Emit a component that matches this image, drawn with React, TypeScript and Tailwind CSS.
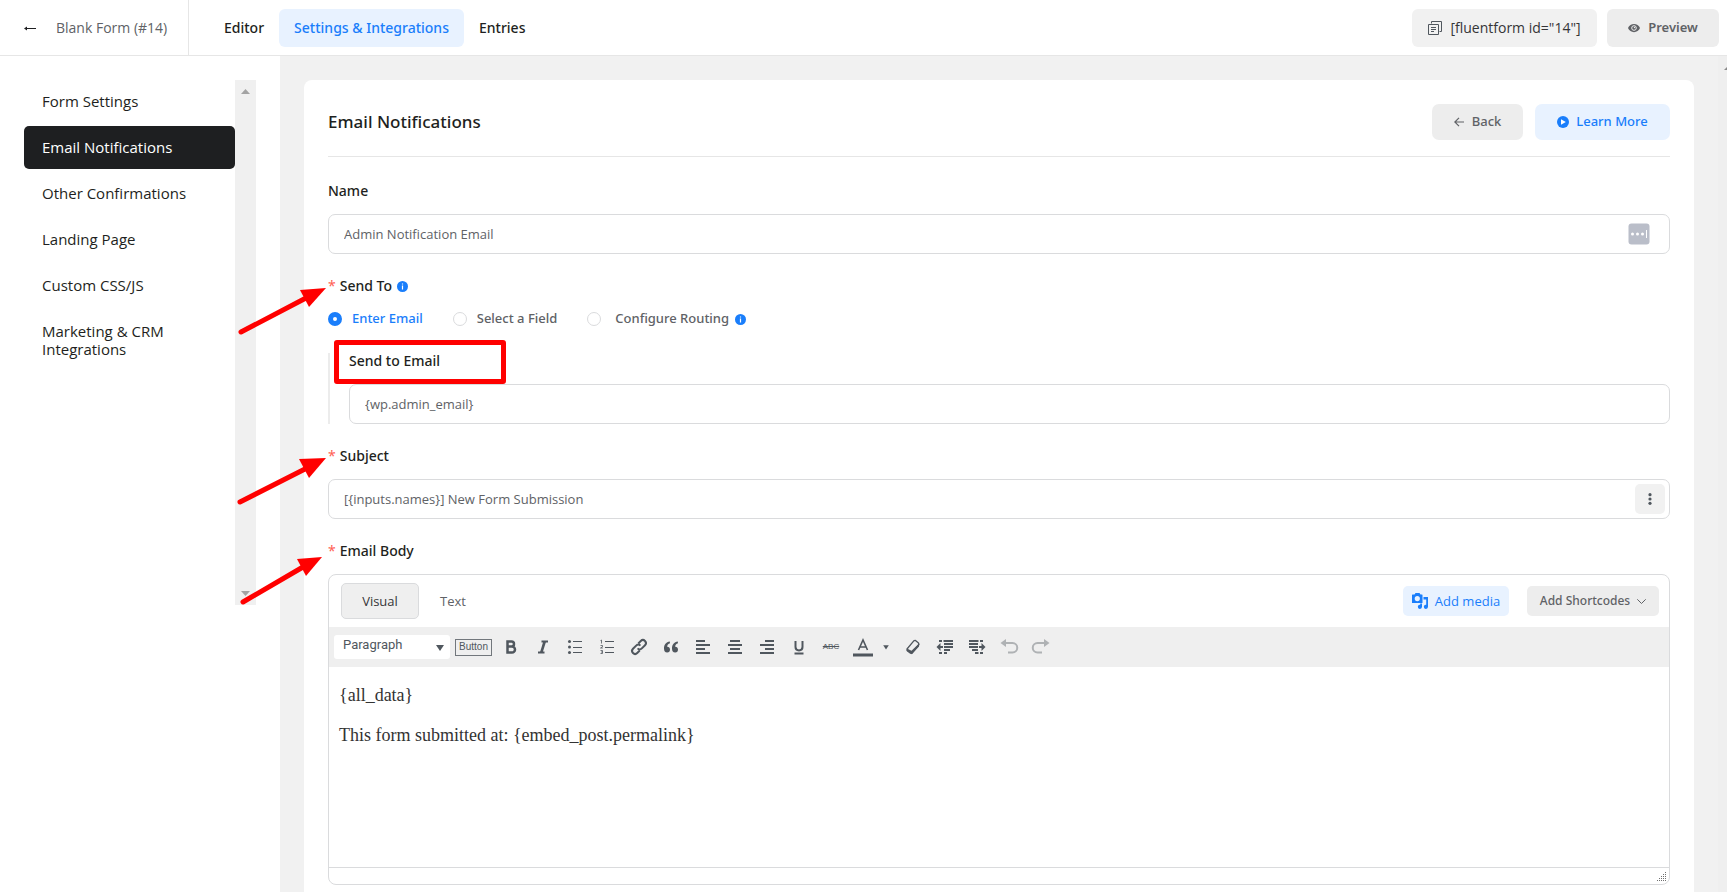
import type { ReactNode } from "react";
import clsx from "clsx";

const MENU = [
  "Form Settings",
  "Email Notifications",
  "Other Confirmations",
  "Landing Page",
  "Custom CSS/JS",
  "Marketing & CRM Integrations",
];

const TABS = ["Editor", "Settings & Integrations", "Entries"];

const ARROWS = [
  { line: "M241 332 L306 298", head: "326,288 300,290 309,307" },
  { line: "M240 502 L305 469", head: "326,458 299,459 309,478" },
  { line: "M243 602 L303 567", head: "322,557 297,559 306,576" },
];

const RESIZE_DOTS = [0, 1, 2, 3, 4].flatMap((row) =>
  Array.from({ length: row + 1 }, (_, i) => ({ x: 8 - i * 2, y: row * 2 }))
);

function InfoIcon() {
  return (
    <svg className="h-[11px] w-[11px] shrink-0" viewBox="0 0 11 11" aria-hidden="true">
      <circle cx="5.5" cy="5.5" r="5.5" fill="#1a7efb" />
      <path d="M5.5 2.4v1.2M5.5 4.6v4" stroke="#fff" strokeWidth="1.2" />
    </svg>
  );
}

function Label({ htmlFor, required, children }: { htmlFor: string; required?: boolean; children: ReactNode }) {
  return (
    <label htmlFor={htmlFor} className="flex h-6 items-center font-['Noto_Sans',sans-serif] text-sm font-medium text-[#1e1f21]">
      {required && <span className="mr-1 font-normal text-[#ff6154]">*</span>}
      {children}
    </label>
  );
}

function Tool({ name, width = "w-8", children }: { name: string; width?: string; children: ReactNode }) {
  return (
    <button type="button" aria-label={name} className={clsx("flex h-8 shrink-0 items-center justify-center text-[#50575e]", width)}>
      <svg className="h-5 w-5" viewBox="0 0 20 20" fill="none" stroke="currentColor" strokeWidth="2">
        {children}
      </svg>
    </button>
  );
}

function Header() {
  return (
    <header className="flex h-14 items-center border-b border-[#e6e6e6] bg-white pr-2">
      <a href="#forms" className="flex h-full w-[189px] shrink-0 items-center border-r border-[#e6e6e6] pl-6 text-sm text-[#606266]">
        <svg className="mr-5 h-3 w-3" viewBox="0 0 12 12" fill="none" stroke="#1e1f21" aria-hidden="true">
          <path d="M1 6.500H12" />
          <path d="M0 6.500l3-2v4z" fill="#1e1f21" stroke="none" />
        </svg>
        Blank Form (#14)
      </a>
      <nav className="ml-5 flex">
        {TABS.map((tab, i) => (
          <a
            key={tab}
            href="#tab"
            className={clsx(
              "flex h-[38px] items-center rounded-md px-[15px] font-['Noto_Sans',sans-serif] text-sm font-medium",
              i === 1 ? "bg-[#e8f2ff] text-[#1a7efb]" : "text-[#1e1f21]"
            )}
          >
            {tab}
          </a>
        ))}
      </nav>
      <div className="ml-auto flex gap-[10px]">
        <button type="button" className="flex h-[38px] w-[185px] items-center justify-center gap-2 rounded-md bg-[#f1f1f1] text-sm text-[#353537]">
          <svg className="h-[14px] w-[14px]" viewBox="0 0 14 14" fill="none" stroke="#50575e" aria-hidden="true">
            <path d="M3.500 2.500v-2h10v10h-2M.5 3.500h10v10H.5zM3 6.500h5M3 8.500h5M3 10.500h3" />
          </svg>
          [fluentform id="14"]
        </button>
        <button type="button" className="flex h-[38px] w-28 items-center justify-center gap-2 rounded-md bg-[#ededed] font-['Noto_Sans',sans-serif] text-[13px] font-semibold text-[#606266]">
          <svg className="h-3 w-3" viewBox="0 0 12 12" aria-hidden="true">
            <path d="M0 6C2 .5 10 .5 12 6 10 11.500 2 11.500 0 6z" fill="#606266" />
            <circle cx="6" cy="6" r="2.300" fill="none" stroke="#ededed" />
            <circle cx="6.500" cy="5.500" r=".7" fill="#ededed" />
          </svg>
          Preview
        </button>
      </div>
    </header>
  );
}

function Sidebar() {
  return (
    <aside className="flex w-[280px] shrink-0 items-start bg-white pt-6 pr-6 pl-6">
      <nav className="flex flex-1 flex-col gap-[3px]">
        {MENU.map((item, i) => (
          <a
            key={item}
            href="#section"
            className={clsx(
              "rounded-[5px] pt-3 pr-8 pb-[13px] pl-[18px] text-[15px] leading-[18px]",
              i === 1 ? "bg-[#1e1f21] text-white" : "text-[#1e1f21]"
            )}
          >
            {item}
          </a>
        ))}
      </nav>
      <div className="flex h-[525px] w-[21px] flex-col items-center justify-between bg-[#f0f0f0] py-[9px]">
        <svg className="h-[5px] w-[9px]" viewBox="0 0 9 5" fill="#a3a3a3" aria-hidden="true"><path d="M0 5l4.500-5L9 5z" /></svg>
        <svg className="h-[5px] w-[9px]" viewBox="0 0 9 5" fill="#a3a3a3" aria-hidden="true"><path d="M0 0l4.500 5L9 0z" /></svg>
      </div>
    </aside>
  );
}

function Toolbar() {
  return (
    <div className="flex h-10 items-center bg-[#efefef] pl-[5px]">
      <div className="relative shrink-0">
        <select aria-label="Block format" className="block h-6 w-[116px] appearance-none rounded-[3px] bg-white pb-1 pl-[9px] font-['Roboto',sans-serif] text-[13px] text-[#50575e]">
          <option>Paragraph</option>
        </select>
        <svg className="pointer-events-none absolute top-[10px] right-[6px] h-[6px] w-2" viewBox="0 0 8 6" fill="#50575e" aria-hidden="true"><path d="M0 0h8L4 6z" /></svg>
      </div>
      <button type="button" className="mr-[3px] ml-[5px] h-[17px] w-[37px] shrink-0 border border-[#72777c] font-['Liberation_Sans',sans-serif] text-[10px] leading-none text-[#50575e]">
        Button
      </button>
      <Tool name="Bold">
        <path d="M6.500 4.500h4a2.500 2.500 0 0 1 0 5h-4zM6.500 9.500h4.500a3 3 0 0 1 0 6H6.500z" strokeWidth="2.500" />
      </Tool>
      <Tool name="Italic">
        <path d="M8.500 4.500h6.500M5 15.500h6.500" />
        <path d="M11.700 4.500l-3.400 11" strokeWidth="2.600" />
      </Tool>
      <Tool name="Bulleted list">
        <path d="M8 4.500h9M8 10.500h9M8 15.500h9" strokeWidth="1" />
        <g fill="currentColor" stroke="none"><circle cx="4.500" cy="4.500" r="1.500" /><circle cx="4.500" cy="10" r="1.500" /><circle cx="4.500" cy="15.500" r="1.500" /></g>
      </Tool>
      <Tool name="Numbered list">
        <path d="M8 4.500h9M8 10.500h9M8 15.500h9" strokeWidth="1" />
        <path d="M3.500 3.500l1-.5v3.500M3.500 8.500h2v1.300l-2 1.200h2.300M3.500 13.500h2v3h-2M4 15h1.500" strokeWidth=".8" />
      </Tool>
      <Tool name="Insert link">
        <g transform="rotate(-45 10 10)">
          <path d="M8 13H4.500a3 3 0 0 1 0-6H9a3 3 0 0 1 3 3M12 7h3.500a3 3 0 0 1 0 6H11a3 3 0 0 1-3-3" />
        </g>
      </Tool>
      <Tool name="Blockquote">
        <g fill="currentColor" stroke="none">
          <path d="M8.800 4.500C5 5 3 7.500 3 11.500c0 2.500 1 4 3.200 4A2.900 2.900 0 0 0 9 12.600C9 11 8 9.800 6.200 9.800c0-1.800 1-3 2.800-3.600z" />
          <path d="M16.800 4.500C13 5 11 7.500 11 11.500c0 2.500 1 4 3.200 4a2.900 2.900 0 0 0 2.800-2.900c0-1.600-1-2.800-2.800-2.800 0-1.800 1-3 2.800-3.600z" />
        </g>
      </Tool>
      <Tool name="Align left"><path d="M3 4h9M3 8h14M3 12h9M3 16h14" /></Tool>
      <Tool name="Align center"><path d="M5 4h10M3 8h14M5 12h10M3 16h14" /></Tool>
      <Tool name="Align right"><path d="M8 4h9M3 8h14M8 12h9M3 16h14" /></Tool>
      <Tool name="Underline">
        <path d="M6.500 4v6c0 4.500 7 4.500 7 0V4M5.500 16.500h9" />
      </Tool>
      <button type="button" aria-label="Strikethrough" className="flex h-8 w-8 shrink-0 items-center justify-center font-['Liberation_Sans',sans-serif] text-[8px] text-[#50575e] line-through">
        ABC
      </button>
      <Tool name="Text color">
        <path d="M5.500 13L10 3l4.500 10M7.200 10h5.600" strokeWidth="1.600" />
        <path d="M0 18h20" strokeWidth="3" />
      </Tool>
      <Tool name="Choose color" width="w-[14px]"><path d="M6 7.500h8l-4 6z" fill="currentColor" stroke="none" /></Tool>
      <Tool name="Clear formatting" width="w-10">
        <path d="M4 12l7-8.300 1.500-.2 3 2.500.5 1.500L9 16l-1.500.2L4 13.500z" strokeWidth="1.300" strokeLinejoin="round" />
        <path d="M4 11.500l4.500 2.300L16 6.500v3L8.800 17.200 4 14z" fill="currentColor" stroke="none" />
      </Tool>
      <Tool name="Decrease indent" width="w-6">
        <path d="M4 4h3M8.500 4H18M9 7h9M9 10h9M9 13h6M4 16h3M9 16h3" strokeWidth="1.800" />
        <path d="M1.500 10l4-4v3H8v2H5.500v3z" fill="currentColor" stroke="none" />
      </Tool>
      <Tool name="Increase indent" width="w-10">
        <path d="M2 4h9.500M13 4h3M2 7h9M2 10h9M5 13h6M8 16h3.500M13 16h3" strokeWidth="1.800" />
        <path d="M18.500 10l-4-4v3H12v2h2.500v3z" fill="currentColor" stroke="none" />
      </Tool>
      <Tool name="Undo" width="w-6">
        <g opacity=".4"><path d="M5 6h8.500a4.500 4.500 0 0 1 0 9.500H9" /><path d="M1.500 6L7 2v8z" fill="currentColor" stroke="none" /></g>
      </Tool>
      <Tool name="Redo" width="w-10">
        <g opacity=".4"><path d="M15 6H6.500a4.500 4.500 0 0 0 0 9.500H11" /><path d="M18.500 6L13 2v8z" fill="currentColor" stroke="none" /></g>
      </Tool>
    </div>
  );
}

function BodyEditor() {
  return (
    <div className="mt-[11px] overflow-hidden rounded-lg border border-[#dadbdd]">
      <div className="flex h-[52px] items-center pr-[10px] pl-3 text-sm">
        <button type="button" className="h-9 w-[78px] rounded-[5px] border border-[#dadbdd] bg-[#efefef] text-[13px] text-[#353537]">Visual</button>
        <button type="button" className="h-9 w-[68px] text-[13px] text-[#606266]">Text</button>
        <button type="button" className="mr-[18px] ml-auto flex h-[30px] w-[106px] items-center justify-center gap-[7px] rounded-[5px] bg-[#e8f2ff] text-[13px] text-[#1a7efb]">
          <svg className="h-4 w-4 shrink-0" viewBox="0 0 16 16" fill="#1a7efb" aria-hidden="true">
            <path fillRule="evenodd" d="M.5 1.500H2.500L3.500 0h4l1 1.500H10q.5 0 .5.500v7.500q0 .5-.5.500H.5Q0 10 0 9.500V2q0-.5.5-.500zM5.300 3a2.600 2.600 0 1 0 0 5.200 2.600 2.600 0 0 0 0-5.200z" />
            <path d="M11.500 4H16v9.800a2.100 2.100 0 1 1-1.800-2.100V6.500h-2.700z" />
            <path d="M8.200 10.500h1.800v3.300a2.100 2.100 0 1 1-1.800-2.100z" />
          </svg>
          Add media
        </button>
        <button type="button" className="flex h-[30px] w-[132px] items-center justify-center gap-[7px] rounded-[5px] bg-[#ededed] font-['Noto_Sans',sans-serif] text-xs font-medium text-[#606266]">
          Add Shortcodes
          <svg className="h-[5px] w-[9px]" viewBox="0 0 9 5" fill="none" stroke="#606266" aria-hidden="true"><path d="M.3.3l4.200 4.200L8.700.3" /></svg>
        </button>
      </div>
      <Toolbar />
      <textarea
        id="body"
        className="block h-[200px] w-full resize-none px-[10px] pt-[18px] font-['Liberation_Serif',serif] text-lg leading-5 text-[#333] outline-none"
        defaultValue={"{all_data}\n\nThis form submitted at: {embed_post.permalink}"}
      />
      <div className="flex h-[17px] items-end justify-end border-t border-[#dadbdd] pr-[3px] pb-[3px]">
        <svg className="h-[9px] w-[9px]" viewBox="0 0 9 9" fill="#707070" shapeRendering="crispEdges" aria-hidden="true">
          {RESIZE_DOTS.map((dot) => (
            <rect key={`${dot.x}-${dot.y}`} x={dot.x} y={dot.y} width="1" height="1" />
          ))}
        </svg>
      </div>
    </div>
  );
}

function SendToOption({ id, label, checked, info }: { id: string; label: string; checked?: boolean; info?: boolean }) {
  return (
    <div className="flex items-center font-['Noto_Sans',sans-serif]">
      <input
        id={id}
        type="radio"
        name="sendTo"
        defaultChecked={checked}
        className="h-[14px] w-[14px] appearance-none rounded-full border border-[#dadbdd] bg-white checked:border-[5px] checked:border-[#1a7efb]"
      />
      <label htmlFor={id} className={clsx("text-[13px] font-medium", info ? "pl-[14px]" : "pl-[10px]", checked ? "text-[#1a7efb]" : "text-[#606266]")}>
        {label}
      </label>
      {info && <span className="ml-[6px]"><InfoIcon /></span>}
    </div>
  );
}

const FIELD = "block h-10 w-full rounded-[7px] border border-[#dadbdd] bg-white px-[15px] text-[13px] text-[#606266] outline-none";

export default function App() {
  return (
    <div className="relative flex h-screen flex-col overflow-hidden bg-[#f1f1f1] font-['Open_Sans',sans-serif]">
      <Header />
      <div className="flex min-h-0 flex-1">
        <Sidebar />
        <main className="min-w-0 flex-1 pt-6 pl-6">
          <form className="min-h-full rounded-t-lg bg-white px-6 pt-6">
            <div className="flex items-center border-b border-[#e6e6e6] pb-4">
              <h1 className="font-['Noto_Sans',sans-serif] text-[17px] font-medium text-[#1e1f21]">Email Notifications</h1>
              <button type="button" className="ml-auto flex h-9 w-[91px] items-center justify-center gap-2 rounded-[7px] bg-[#ededed] font-['Noto_Sans',sans-serif] text-[13px] font-medium text-[#606266]">
                <svg className="h-[10px] w-[10px]" viewBox="0 0 10 10" fill="none" stroke="#606266" strokeWidth="1.200" aria-hidden="true"><path d="M10 5H.8M5 .8L.8 5 5 9.200" /></svg>
                Back
              </button>
              <button type="button" className="ml-3 flex h-9 w-[135px] items-center justify-center gap-[7px] rounded-[7px] bg-[#e8f2ff] font-['Noto_Sans',sans-serif] text-[13px] font-medium text-[#1a7efb]">
                <svg className="h-3 w-3" viewBox="0 0 12 12" aria-hidden="true"><circle cx="6" cy="6" r="6" fill="#1a7efb" /><path d="M4 3.200v5.600L8.800 6z" fill="#fff" /></svg>
                Learn More
              </button>
            </div>

            <div className="mt-[22px]">
              <Label htmlFor="name">Name</Label>
              <div className="relative mt-[11px]">
                <input id="name" className={FIELD} defaultValue="Admin Notification Email" />
                <svg className="absolute top-[9px] right-5 h-[22px] w-[22px]" viewBox="0 0 22 22" aria-hidden="true">
                  <rect x=".5" y=".5" width="21" height="21" rx="3" fill="#babec9" />
                  <g fill="#fff"><circle cx="4.500" cy="11" r="1.500" /><circle cx="9.500" cy="11" r="1.500" /><circle cx="14.500" cy="11" r="1.500" /><path d="M18 7h1v8h-1z" /></g>
                </svg>
              </div>
            </div>

            <fieldset className="mt-5">
              <legend className="flex h-6 items-center font-['Noto_Sans',sans-serif] text-sm font-medium text-[#1e1f21]">
                <span className="mr-1 font-normal text-[#ff6154]">*</span>
                Send To
                <span className="ml-[5px]"><InfoIcon /></span>
              </legend>
              <div className="mt-[9px] flex h-6 gap-[30px]">
                <SendToOption id="enter" label="Enter Email" checked />
                <SendToOption id="field" label="Select a Field" />
                <SendToOption id="routing" label="Configure Routing" info />
              </div>
              <div className="mt-[22px] border-l-2 border-[#ececec] pl-[19px]">
                <div className="relative h-[31px]">
                  <div className="pointer-events-none absolute -top-[13px] -left-[15px] h-[44px] w-[172px] rounded-[3px] border-[5px] border-[#f00]" />
                  <label htmlFor="email" className="block font-['Noto_Sans',sans-serif] text-sm leading-4 font-medium text-[#1e1f21]">Send to Email</label>
                </div>
                <input id="email" className={FIELD} defaultValue="{wp.admin_email}" />
              </div>
            </fieldset>

            <div className="mt-5">
              <Label htmlFor="subject" required>Subject</Label>
              <div className="relative mt-[11px]">
                <input id="subject" className={FIELD} defaultValue="[{inputs.names}] New Form Submission" />
                <button type="button" aria-label="Insert shortcode" className="absolute top-[5px] right-[5px] flex h-[30px] w-[30px] items-center justify-center rounded-[5px] bg-[#f1f1f1]">
                  <svg className="h-3 w-1" viewBox="0 0 4 12" fill="#50575e" aria-hidden="true"><circle cx="2" cy="1.700" r="1.600" /><circle cx="2" cy="6" r="1.600" /><circle cx="2" cy="10.300" r="1.600" /></svg>
                </button>
              </div>
            </div>

            <div className="mt-5">
              <Label htmlFor="body" required>Email Body</Label>
              <BodyEditor />
            </div>
          </form>
        </main>
        <div className="w-6 shrink-0" />
        <div className="w-[9px] shrink-0 overflow-hidden bg-[#efefef] pt-[11px] pl-[6px]">
          <svg className="h-[3px] w-[3px]" viewBox="0 0 3 3" fill="#8a8a8a" aria-hidden="true"><path d="M0 3l3-3v3z" /></svg>
        </div>
      </div>

      {/* callout arrows pointing at the required fields */}
      <svg className="pointer-events-none absolute top-0 left-0 h-[620px] w-[340px]" viewBox="0 0 340 620" aria-hidden="true">
        {ARROWS.map((arrow) => (
          <g key={arrow.head}>
            <path d={arrow.line} stroke="#f00" strokeWidth="5" strokeLinecap="round" />
            <polygon points={arrow.head} fill="#f00" />
          </g>
        ))}
      </svg>
    </div>
  );
}
